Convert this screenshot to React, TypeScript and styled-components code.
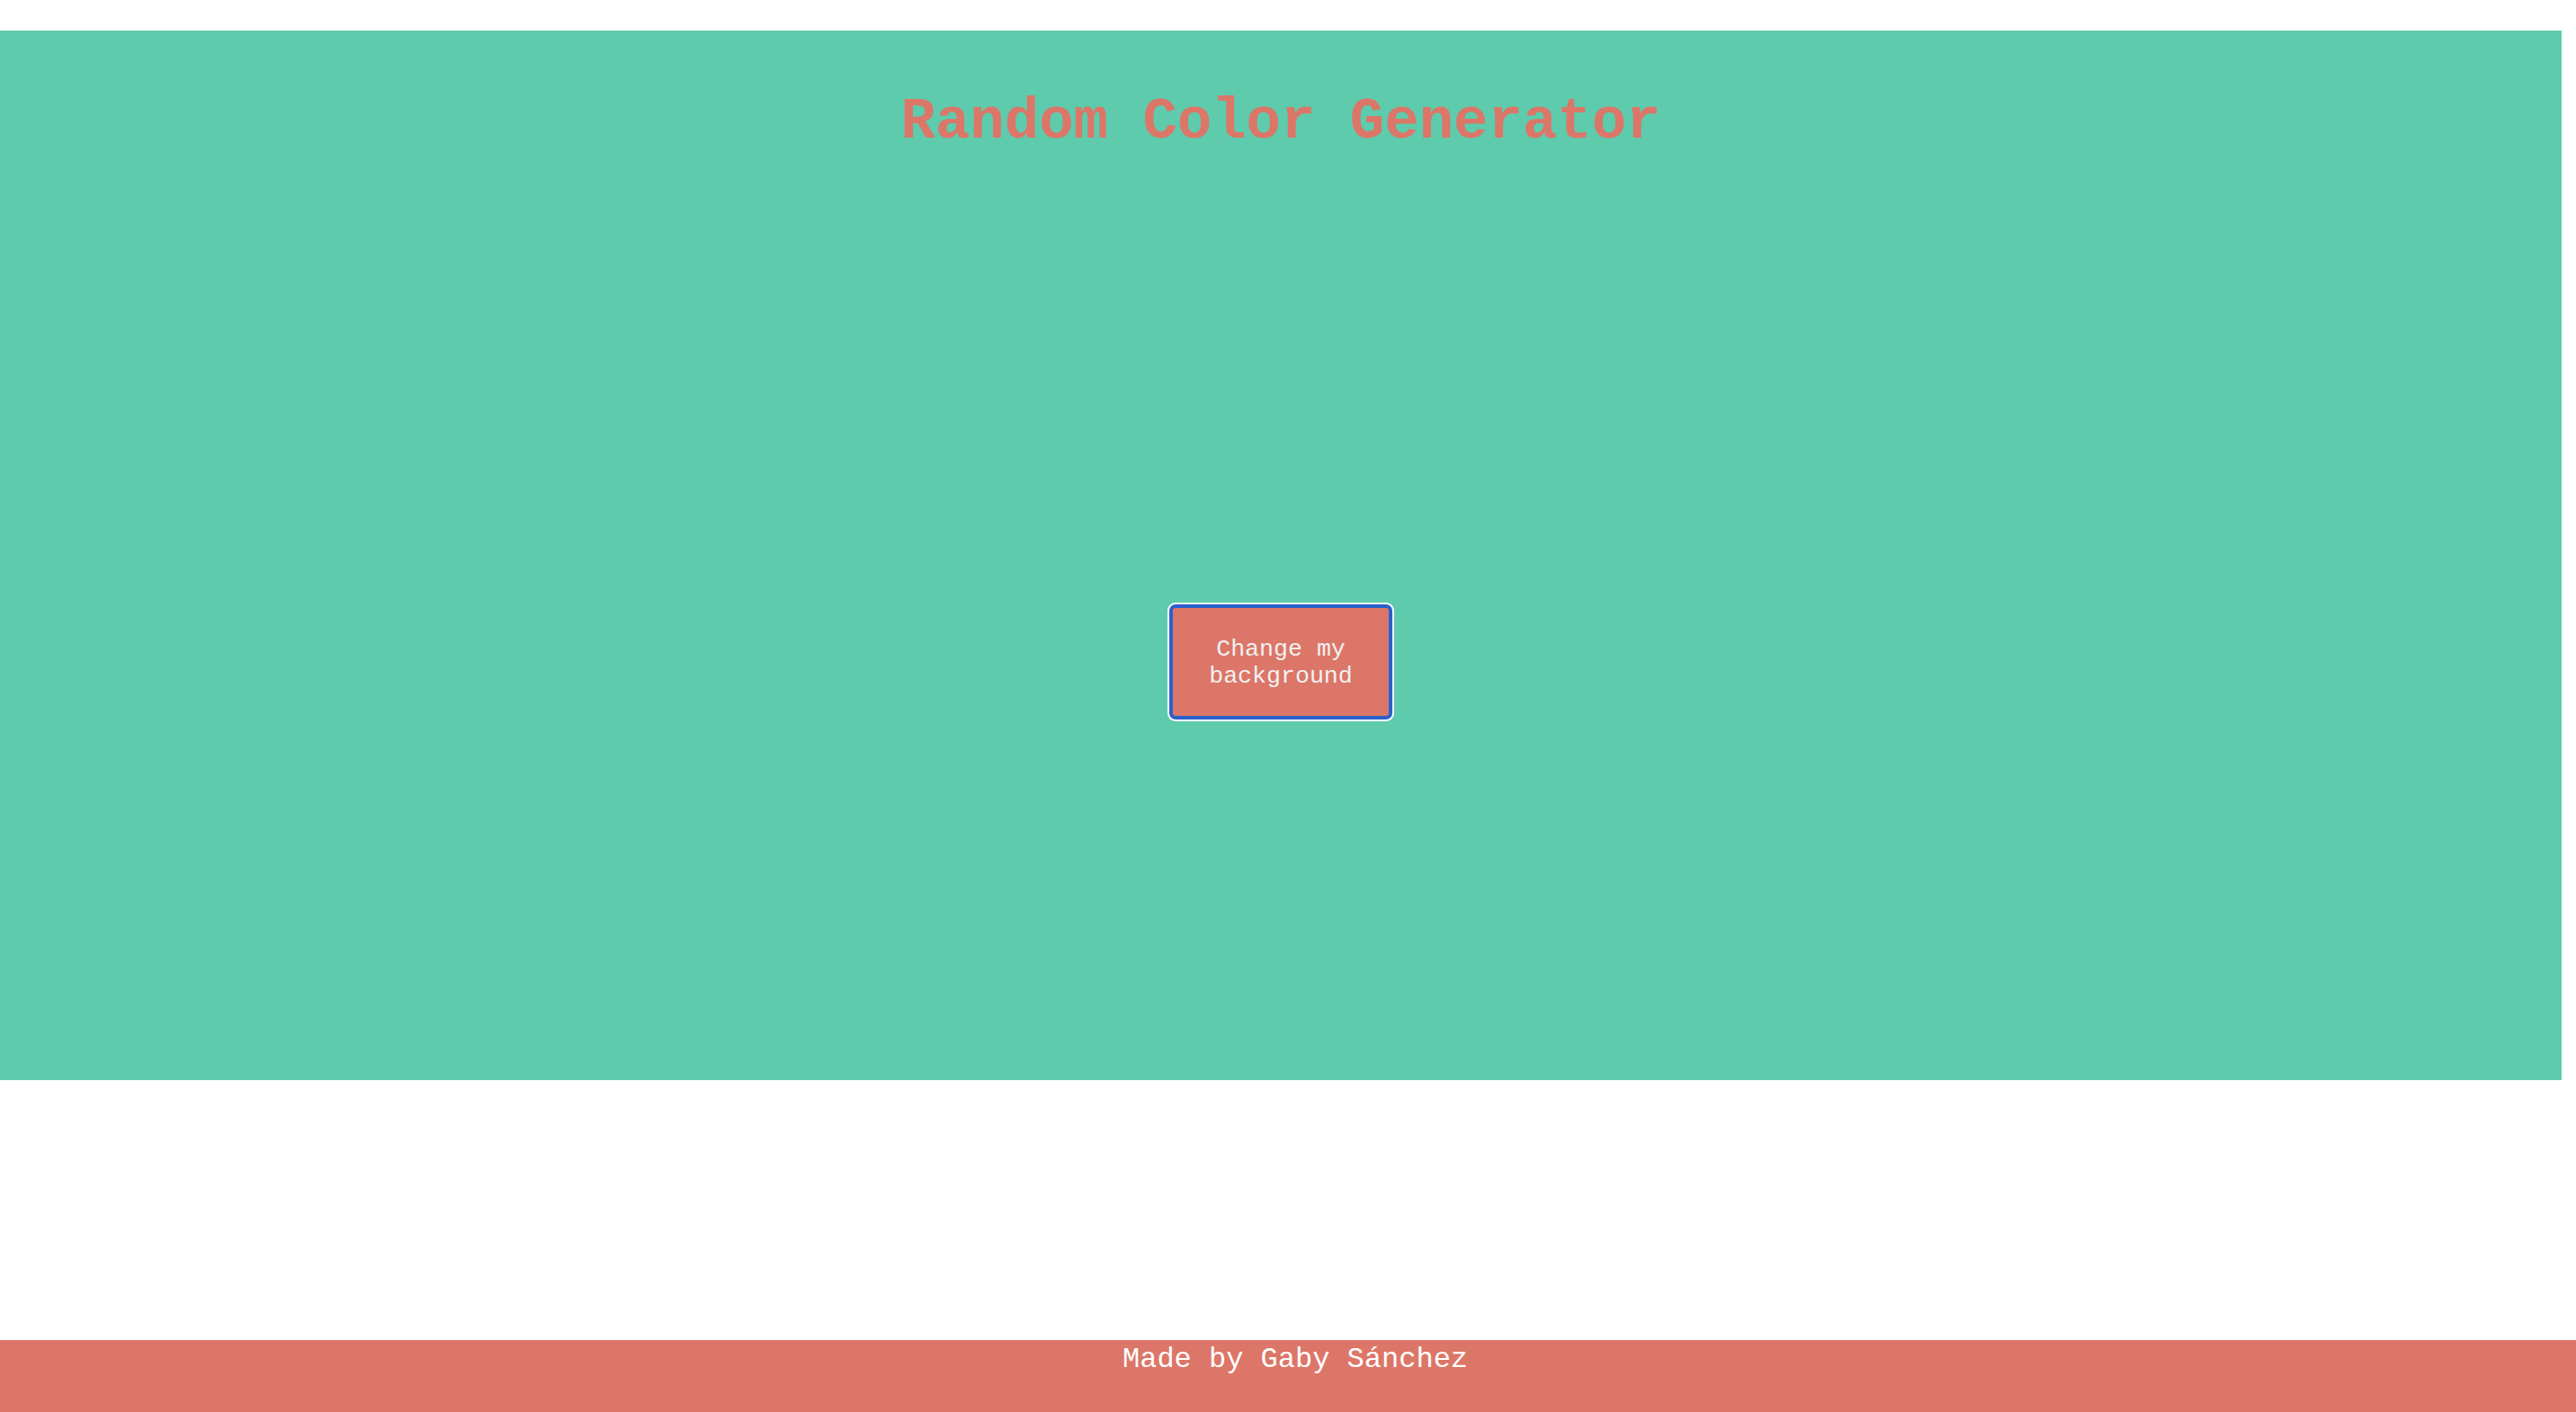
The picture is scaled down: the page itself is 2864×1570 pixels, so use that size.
import React, { useState } from 'react';
import styled, { createGlobalStyle } from 'styled-components';

const colors = {
  green: '#5ecbad',
  coral: '#dc7668',
  ring: '#2a60cc',
  text: '#f1f1f1',
};

const GlobalStyle = createGlobalStyle`
  html, body {
    margin: 0;
    padding: 0;
    background: #fff;
  }
  body {
    font-family: "Liberation Mono", "Courier New", monospace;
  }
`;

const Page = styled.div`
  min-height: 100vh;
  display: flex;
  flex-direction: column;
`;

const Stage = styled.main<{ $bg: string }>`
  width: calc(100% - 16px);
  height: 1167px;
  margin-top: 34px;
  padding-top: 66px;
  box-sizing: border-box;
  background: ${(p) => p.$bg};
  display: flex;
  flex-direction: column;
  align-items: center;
`;

const Title = styled.h1`
  margin: 0;
  font-size: 64px;
  font-weight: 700;
  color: ${colors.coral};
  text-align: center;
`;

const ChangeButton = styled.button`
  margin-top: 500px;
  width: 248px;
  height: 128px;
  box-sizing: border-box;
  padding: 2px 20px 0;
  background: ${colors.coral};
  color: ${colors.text};
  border: 4px solid ${colors.ring};
  border-radius: 7px;
  box-shadow: 0 0 0 2px #fff;
  font-family: "Liberation Mono", "Courier New", monospace;
  font-size: 26.6px;
  line-height: 30px;
  cursor: pointer;
  outline: none;
`;

const Footer = styled.footer`
  margin-top: auto;
  height: 80px;
  box-sizing: border-box;
  padding: 3px 0 0 16px;
  background: ${colors.coral};
  color: #fff;
  font-size: 32px;
  text-align: center;
`;

const randomColor = () =>
  '#' + Math.floor(Math.random() * 0xffffff).toString(16).padStart(6, '0');

const App = () => {
  const [bg, setBg] = useState(colors.green);

  return (
    <Page>
      <GlobalStyle />
      <Stage $bg={bg}>
        <Title>Random Color Generator</Title>
        <ChangeButton onClick={() => setBg(randomColor())}>Change my background</ChangeButton>
      </Stage>
      <Footer>Made by Gaby Sánchez</Footer>
    </Page>
  );
};

export default App;
